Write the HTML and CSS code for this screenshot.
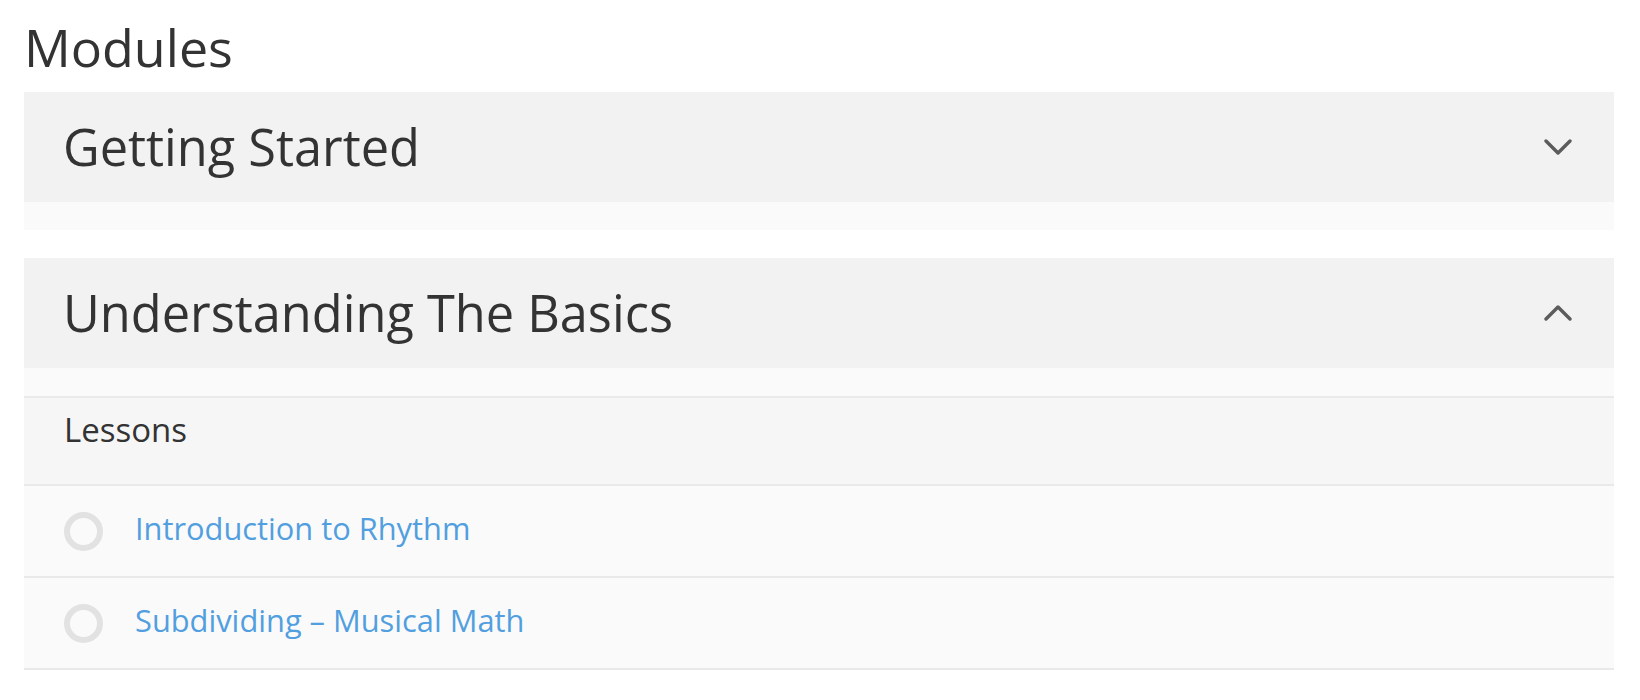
FILE: index.html
```html
<!DOCTYPE html>
<html lang="en">
<head>
<meta charset="utf-8">
<title>Modules</title>
<link rel="stylesheet" href="styles.css">
</head>
<body>
<div class="page">
  <h2 class="page-title">Modules</h2>

  <section class="module">
    <div class="module-header">
      <h3 class="module-title">Getting Started</h3>
      <svg class="chevron" width="28" height="16" viewBox="0 0 28 16" aria-hidden="true">
        <polyline points="2,2 14,14 26,2" fill="none" stroke="#5c5c5c" stroke-width="3.4" stroke-linecap="round" stroke-linejoin="round"/>
      </svg>
    </div>
    <div class="module-body"></div>
  </section>

  <section class="module">
    <div class="module-header">
      <h3 class="module-title">Understanding The Basics</h3>
      <svg class="chevron" width="28" height="16" viewBox="0 0 28 16" aria-hidden="true">
        <polyline points="2,14 14,2 26,14" fill="none" stroke="#5c5c5c" stroke-width="3.4" stroke-linecap="round" stroke-linejoin="round"/>
      </svg>
    </div>
    <div class="module-body">
      <div class="lessons-head">Lessons</div>
      <a class="lesson" href="#"><span class="status"></span><span class="lesson-name">Introduction to Rhythm</span></a>
      <a class="lesson" href="#"><span class="status"></span><span class="lesson-name">Subdividing – Musical Math</span></a>
    </div>
  </section>
</div>
</body>
</html>
```

FILE: styles.css
```css
html, body {
  margin: 0;
  padding: 0;
  background: #ffffff;
}

body {
  font-family: "Open Sans", "Noto Sans", "Liberation Sans", sans-serif;
  color: #333333;
}

.page {
  padding: 0 26px 0 24px;
}

.page-title {
  margin: 12px 0 10px;
  font-size: 52px;
  line-height: 70px;
  font-weight: 400;
  color: #333333;
}

.module {
  margin-bottom: 28px;
}

.module-header {
  height: 110px;
  background: #f2f2f2;
  display: flex;
  align-items: center;
  justify-content: space-between;
  padding: 0 42px 0 39px;
}

.module-title {
  margin: 0;
  font-size: 50.5px;
  font-weight: 400;
  line-height: 68px;
  color: #333333;
}

.chevron {
  display: block;
  flex: none;
}

.module-body {
  background: #fafafa;
  padding-top: 28px;
}

.lessons-head {
  border-top: 2px solid #e9e9e9;
  border-bottom: 2px solid #e9e9e9;
  background: #f6f6f6;
  height: 76px;
  padding: 10px 40px 0;
  font-size: 33px;
  line-height: 44px;
}

.lesson {
  display: flex;
  align-items: center;
  height: 90px;
  padding: 0 40px;
  border-bottom: 2px solid #e9e9e9;
  text-decoration: none;
  background: #fafafa;
}

.status {
  width: 27px;
  height: 27px;
  border: 6px solid #e2e2e2;
  border-radius: 50%;
  flex: none;
  margin-right: 32px;
}

.lesson-name {
  font-size: 30.8px;
  line-height: 42px;
  color: #529fe0;
  padding-bottom: 6px;
}
```
